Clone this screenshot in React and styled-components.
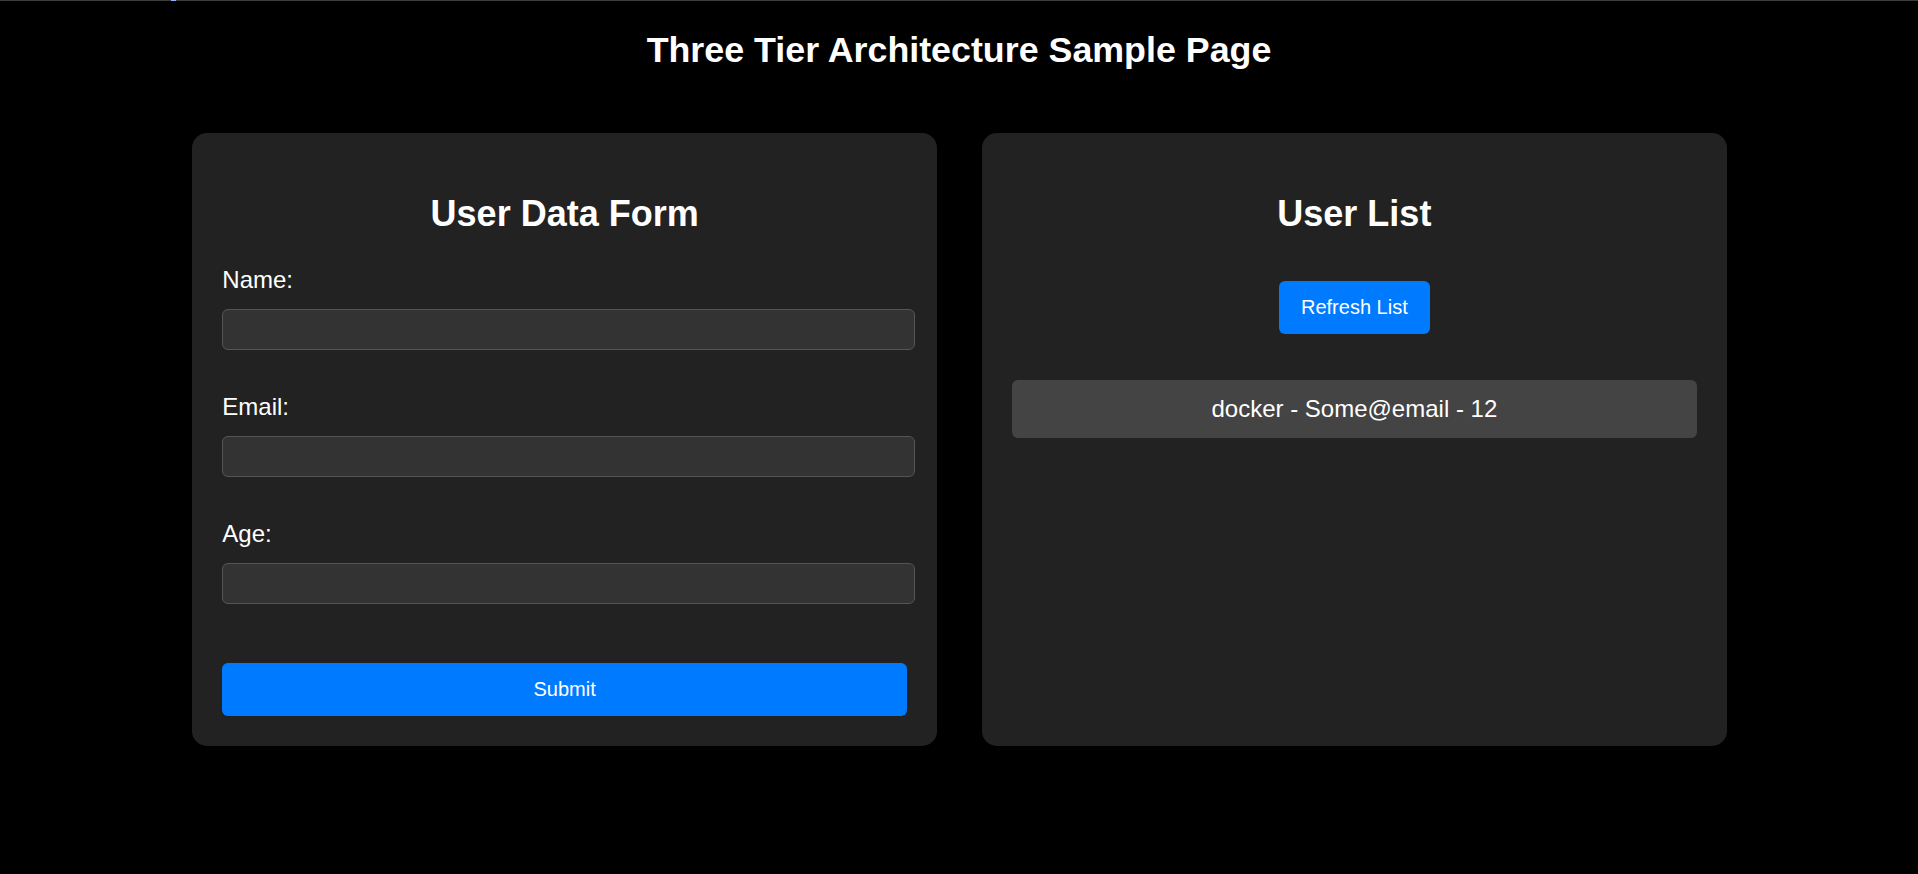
import styled, { createGlobalStyle } from "styled-components";

const GlobalStyle = createGlobalStyle`
  html, body {
    margin: 0;
    padding: 0;
    background-color: #000;
  }
  body {
    font-family: "Liberation Sans", Arial, sans-serif;
    color: #fff;
  }
`;

const Page = styled.div`
  min-height: 874px;
  background-color: #000;
  color: #fff;
`;

const TopLine = styled.div`
  display: flex;
  height: 1px;
  padding-left: 171px;
  background-color: #3c3c3c;
`;

const TopMark = styled.span`
  width: 5px;
  height: 1px;
  background-color: #8fb4ff;
`;

const Title = styled.h1`
  margin: 29px 0 63px;
  font-size: 35.8px;
  line-height: 40px;
  font-weight: bold;
  text-align: center;
`;

const Container = styled.div`
  width: 80%;
  margin: 0 auto;
  padding-left: 1px;
  display: flex;
  gap: 45px;
`;

const Card = styled.div`
  flex: 1;
  padding: 30px;
  background-color: #222;
  border-radius: 15px;
  display: flex;
  flex-direction: column;
  align-items: ${(p) => (p.$center ? "center" : "stretch")};
`;

const Heading = styled.h2`
  margin: 31px 0 32px;
  font-size: 36px;
  line-height: 40px;
  font-weight: bold;
  text-align: center;
`;

const Label = styled.label`
  display: block;
  margin-bottom: 16px;
  font-size: 24px;
  line-height: 27px;
`;

const Input = styled.input`
  box-sizing: content-box;
  display: block;
  width: 100%;
  height: 39px;
  padding: 0 3px;
  margin: 0 0 43px;
  background-color: #333;
  border: 1px solid #555;
  border-radius: 6px;
  color: #fff;
  font-family: inherit;
  font-size: 20px;
  outline: none;
`;

const Button = styled.button`
  box-sizing: border-box;
  height: 53px;
  padding: 0 22px;
  margin-top: ${(p) => p.$top || "0"};
  width: ${(p) => (p.$full ? "100%" : "auto")};
  background-color: #007bff;
  border: none;
  border-radius: 6px;
  color: #fff;
  font-family: inherit;
  font-size: 20px;
  cursor: pointer;
`;

const List = styled.ul`
  list-style: none;
  margin: 46px 0 0;
  padding: 0;
  width: 100%;
`;

const ListItem = styled.li`
  padding: 15px;
  background-color: #444;
  border-radius: 6px;
  font-size: 24px;
  line-height: 28px;
  text-align: center;
`;

const users = [{ name: "docker", email: "Some@email", age: 12 }];

export default function App() {
  return (
    <Page>
      <GlobalStyle />
      <TopLine>
        <TopMark />
      </TopLine>
      <Title>Three Tier Architecture Sample Page</Title>
      <Container>
        <Card as="form" onSubmit={(e) => e.preventDefault()}>
          <Heading>User Data Form</Heading>
          <Label htmlFor="name">Name:</Label>
          <Input id="name" type="text" />
          <Label htmlFor="email">Email:</Label>
          <Input id="email" type="email" />
          <Label htmlFor="age">Age:</Label>
          <Input id="age" type="number" />
          <Button type="submit" $full $top="16px">
            Submit
          </Button>
        </Card>
        <Card $center>
          <Heading>User List</Heading>
          <Button type="button" $top="15px">
            Refresh List
          </Button>
          <List>
            {users.map((u) => (
              <ListItem key={u.name}>
                {u.name} - {u.email} - {u.age}
              </ListItem>
            ))}
          </List>
        </Card>
      </Container>
    </Page>
  );
}
